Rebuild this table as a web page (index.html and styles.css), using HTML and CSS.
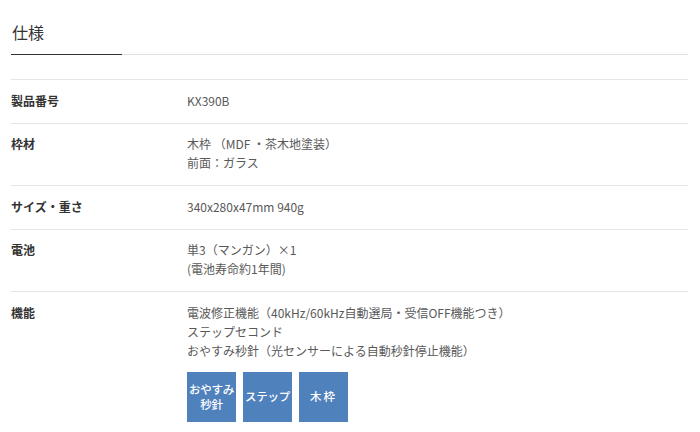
FILE: index.html
```html
<!DOCTYPE html>
<html lang="ja">
<head>
<meta charset="utf-8">
<link rel="stylesheet" href="styles.css">
</head>
<body>
<section class="spec">
  <h2 class="spec-title"><span class="spec-title-text">仕様</span></h2>
  <dl class="spec-table">
    <div class="spec-row">
      <dt class="spec-label">製品番号</dt>
      <dd class="spec-value">KX390B</dd>
    </div>
    <div class="spec-row">
      <dt class="spec-label">枠材</dt>
      <dd class="spec-value">木枠 （MDF ・茶木地塗装）<br>前面：ガラス</dd>
    </div>
    <div class="spec-row">
      <dt class="spec-label">サイズ・重さ</dt>
      <dd class="spec-value">340x280x47mm 940g</dd>
    </div>
    <div class="spec-row">
      <dt class="spec-label">電池</dt>
      <dd class="spec-value">単3（マンガン）×1<br>(電池寿命約1年間)</dd>
    </div>
    <div class="spec-row">
      <dt class="spec-label">機能</dt>
      <dd class="spec-value">電波修正機能（40kHz/60kHz自動選局・受信OFF機能つき）<br>ステップセコンド<br>おやすみ秒針（光センサーによる自動秒針停止機能）
        <div class="badges">
          <span class="badge">おやすみ<br>秒針</span>
          <span class="badge">ステップ</span>
          <span class="badge badge-wide">木枠</span>
        </div>
      </dd>
    </div>
  </dl>
</section>
</body>
</html>
```

FILE: styles.css
```css
* { box-sizing: border-box; }
html, body { margin: 0; padding: 0; background: #fff; }
body {
  font-family: "Noto Sans CJK JP", "Noto Sans", sans-serif;
  color: #333;
}
.spec {
  padding: 0 12px 0 11px;
}
.spec-title {
  margin: 0;
  padding-top: 21px;
  font-size: 16px;
  font-weight: 400;
  line-height: 23px;
  color: #333;
  border-bottom: 1px solid #e2e2e2;
  display: flex;
}
.spec-title-text {
  width: 111px;
  padding: 0 0 10px 1px;
  margin-bottom: -1px;
  border-bottom: 1px solid #333;
}
.spec-table {
  margin: 24px 0 0;
  border-top: 1px solid #e6e6e6;
}
.spec-row {
  display: grid;
  grid-template-columns: 176px 1fr;
  border-bottom: 1px solid #e6e6e6;
  padding: 10.5px 0 13px;
}
.spec-label {
  margin: 0;
  font-size: 12px;
  font-weight: 700;
  line-height: 19px;
  color: #333;
}
.spec-value {
  margin: 0;
  font-size: 12px;
  line-height: 19px;
  color: #595959;
}
.badges {
  display: flex;
  gap: 7px;
  margin-top: 12px;
}
.badge {
  width: 49px;
  height: 50px;
  background: #4f81bd;
  color: #fff;
  font-size: 11.5px;
  font-weight: 500;
  line-height: 15px;
  display: flex;
  align-items: center;
  justify-content: center;
  text-align: center;
  letter-spacing: -0.3px;
}
.badge-wide { letter-spacing: 2px; }
```
